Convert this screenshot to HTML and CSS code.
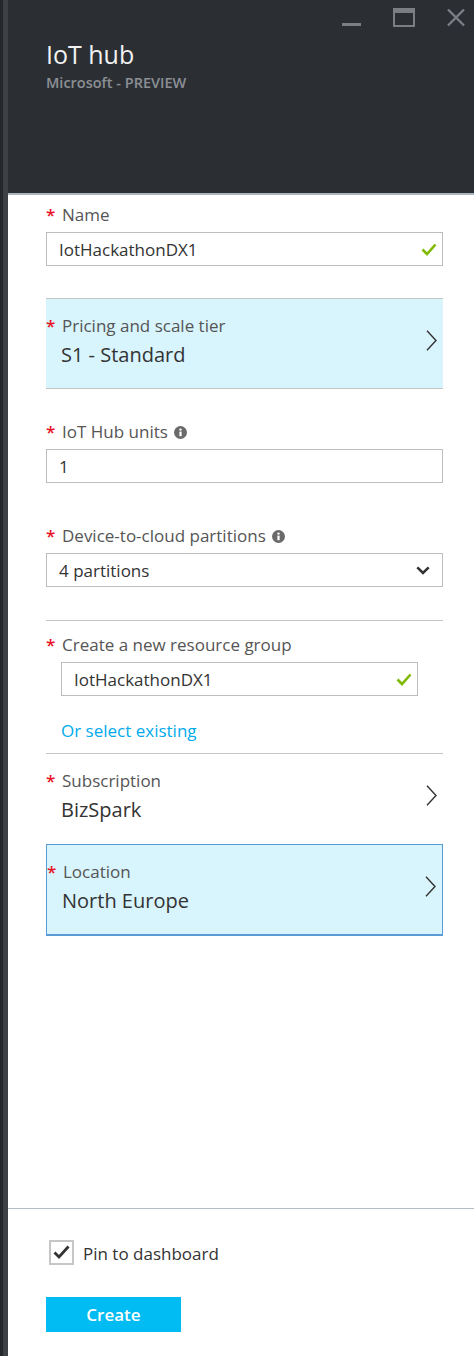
FILE: index.html
```html
<!DOCTYPE html>
<html lang="en">
<head>
<meta charset="utf-8">
<title>IoT hub</title>
<link rel="stylesheet" href="styles.css">
</head>
<body>
<div class="app">
  <div class="rail"></div>
  <div class="blade">
    <header class="blade-header">
      <div class="controls">
        <svg class="ctl" width="19" height="20" viewBox="0 0 19 20"><rect x="0" y="15" width="19" height="3" fill="#7b7f84"/></svg>
        <svg class="ctl" width="22" height="20" viewBox="0 0 22 20"><rect x="1" y="1" width="20" height="17" fill="none" stroke="#7b7f84" stroke-width="2"/><rect x="0" y="0" width="22" height="5" fill="#7b7f84"/></svg>
        <svg class="ctl" width="18" height="20" viewBox="0 0 18 20"><path d="M1 1.5 L17 17.5 M17 1.5 L1 17.5" stroke="#7b7f84" stroke-width="2.4" fill="none"/></svg>
      </div>
      <h1 class="title">IoT hub</h1>
      <div class="subtitle">Microsoft - PREVIEW</div>
    </header>

    <main class="blade-body">
      <div class="field field-name">
        <div class="label"><span class="req">*</span>Name</div>
        <div class="input">
          <span>IotHackathonDX1</span>
          <svg class="ok" width="16" height="13" viewBox="0 0 16 13"><path d="M1.5 6.5 L6 11 L14.5 1.5" stroke="#7fba00" stroke-width="2.6" fill="none"/></svg>
        </div>
      </div>

      <div class="picker picker-tier">
        <div class="picker-text">
          <div class="label"><span class="req">*</span>Pricing and scale tier</div>
          <div class="picker-value">S1 - Standard</div>
        </div>
        <svg class="chev" width="11" height="21" viewBox="0 0 11 21"><path d="M1 0.8 L10 10.5 L1 20.2" stroke="#333" stroke-width="1.4" fill="none"/></svg>
      </div>

      <div class="field field-units">
        <div class="label"><span class="req">*</span>IoT Hub units<svg class="info" width="13" height="13" viewBox="0 0 13 13"><circle cx="6.5" cy="6.5" r="6.5" fill="#6a6a6a"/><circle cx="6.5" cy="3.6" r="1.2" fill="#fff"/><rect x="5.4" y="5.6" width="2.2" height="4.6" fill="#fff"/></svg></div>
        <div class="input"><span>1</span></div>
      </div>

      <div class="field field-partitions">
        <div class="label"><span class="req">*</span>Device-to-cloud partitions<svg class="info" width="13" height="13" viewBox="0 0 13 13"><circle cx="6.5" cy="6.5" r="6.5" fill="#6a6a6a"/><circle cx="6.5" cy="3.6" r="1.2" fill="#fff"/><rect x="5.4" y="5.6" width="2.2" height="4.6" fill="#fff"/></svg></div>
        <div class="input select">
          <span>4 partitions</span>
          <svg class="down" width="14" height="9" viewBox="0 0 14 9"><path d="M1.3 1.3 L7 7 L12.7 1.3" stroke="#333" stroke-width="2.6" fill="none"/></svg>
        </div>
      </div>

      <section class="group">
        <div class="label"><span class="req">*</span>Create a new resource group</div>
        <div class="input input-indent">
          <span>IotHackathonDX1</span>
          <svg class="ok" width="16" height="13" viewBox="0 0 16 13"><path d="M1.5 6.5 L6 11 L14.5 1.5" stroke="#7fba00" stroke-width="2.6" fill="none"/></svg>
        </div>
        <a class="link" href="#">Or select existing</a>
      </section>

      <div class="picker">
        <div class="picker-text">
          <div class="label"><span class="req">*</span>Subscription</div>
          <div class="picker-value">BizSpark</div>
        </div>
        <svg class="chev" width="11" height="21" viewBox="0 0 11 21"><path d="M1 0.8 L10 10.5 L1 20.2" stroke="#333" stroke-width="1.4" fill="none"/></svg>
      </div>

      <div class="picker picker-location">
        <div class="picker-text">
          <div class="label"><span class="req">*</span>Location</div>
          <div class="picker-value">North Europe</div>
        </div>
        <svg class="chev" width="11" height="21" viewBox="0 0 11 21"><path d="M1 0.8 L10 10.5 L1 20.2" stroke="#333" stroke-width="1.4" fill="none"/></svg>
      </div>
    </main>

    <footer class="blade-footer">
      <div class="pin">
        <span class="checkbox"><svg width="19" height="17" viewBox="0 0 19 17"><path d="M2.5 8.5 L7 13 L16.5 2.5" stroke="#333" stroke-width="2.8" fill="none"/></svg></span>
        <span class="pin-text">Pin to dashboard</span>
      </div>
      <button class="btn" type="button">Create</button>
    </footer>
  </div>
</div>
</body>
</html>
```

FILE: styles.css
```css
html, body {
  margin: 0;
  padding: 0;
}

body {
  font-family: "Open Sans", "Noto Sans", sans-serif;
  background: #ffffff;
  color: #333;
}

.app {
  display: flex;
  width: 474px;
  height: 1356px;
  overflow: hidden;
}

.rail {
  flex: none;
  width: 8px;
  background: linear-gradient(to right, #24272b 0 3px, #3d4146 3px 8px);
}

.blade {
  flex: 1;
  min-width: 0;
  display: flex;
  flex-direction: column;
}

/* header */
.blade-header {
  box-sizing: border-box;
  height: 195px;
  background: #2b2f34;
  border-bottom: 2px solid #aab6bd;
  padding: 8px 9px 0 38px;
}

.controls {
  display: flex;
  justify-content: flex-end;
  gap: 32px;
  height: 20px;
}

.ctl {
  display: block;
  flex: none;
}

.title {
  margin: 10px 0 0;
  font-size: 25px;
  line-height: 32px;
  font-weight: 400;
  color: #f2f2f2;
}

.subtitle {
  margin-top: 3px;
  font-size: 14.5px;
  line-height: 20px;
  font-weight: 600;
  color: #8c9095;
}

/* body */
.blade-body {
  flex: 1;
  padding: 9px 31px 0 38px;
}

.label {
  display: flex;
  align-items: center;
  font-size: 17px;
  line-height: 22px;
  color: #555;
}

.req {
  flex: none;
  width: 16px;
  color: #e81123;
  font-weight: 600;
  align-self: flex-start;
}

.info {
  margin-left: 6px;
  flex: none;
}

.input {
  box-sizing: border-box;
  height: 34px;
  margin-top: 6px;
  border: 1px solid #bdbdbd;
  display: flex;
  align-items: center;
  justify-content: space-between;
  padding: 0 5px 0 12px;
  font-size: 17px;
  color: #333;
  background: #fff;
}

.select {
  padding-right: 12px;
}

.input-indent {
  margin-left: 15px;
  margin-right: 25px;
}

.field-name {
  margin-bottom: 32px;
}

.field-units {
  margin-top: 32px;
  margin-bottom: 42px;
}

.field-partitions {
  margin-bottom: 33px;
}

/* pickers */
.picker {
  box-sizing: border-box;
  height: 91px;
  display: flex;
  align-items: center;
  border-top: 1px solid #c4c4c4;
  padding-right: 6px;
}

.picker-text {
  flex: 1;
  align-self: flex-start;
  padding-top: 16px;
}

.picker-value {
  margin-top: 5px;
  padding-left: 15px;
  font-size: 20px;
  line-height: 26px;
  color: #333;
}

.chev {
  flex: none;
  margin-bottom: 7px;
}

.picker-tier {
  background: #d8f4fd;
  border-bottom: 1px solid #c4c4c4;
}

.picker-location {
  height: 92px;
  background: #d8f4fd;
  border: 1px solid #5b9bd5;
  border-bottom-width: 2px;
}

/* resource group */
.group {
  border-top: 1px solid #c4c4c4;
  padding: 13px 0 11px;
}

.link {
  display: block;
  margin-top: 24px;
  padding-left: 15px;
  font-size: 17px;
  line-height: 22px;
  color: #00abec;
  text-decoration: none;
}

/* footer */
.blade-footer {
  border-top: 1px solid #b3bec5;
  padding: 31px 0 24px 38px;
}

.pin {
  display: flex;
  align-items: center;
  height: 25px;
  margin-left: 3px;
}

.checkbox {
  box-sizing: border-box;
  width: 25px;
  height: 25px;
  border: 2px solid #c6c6c6;
  display: flex;
  align-items: center;
  justify-content: center;
}

.checkbox svg {
  display: block;
}

.pin-text {
  margin-left: 9px;
  padding-top: 3px;
  font-size: 17px;
  line-height: 22px;
  color: #333;
}

.btn {
  display: block;
  margin-top: 32px;
  width: 135px;
  height: 35px;
  border: none;
  background: #00bcf2;
  color: #fff;
  font-family: inherit;
  font-size: 17px;
  font-weight: 600;
  padding: 0;
}
```
